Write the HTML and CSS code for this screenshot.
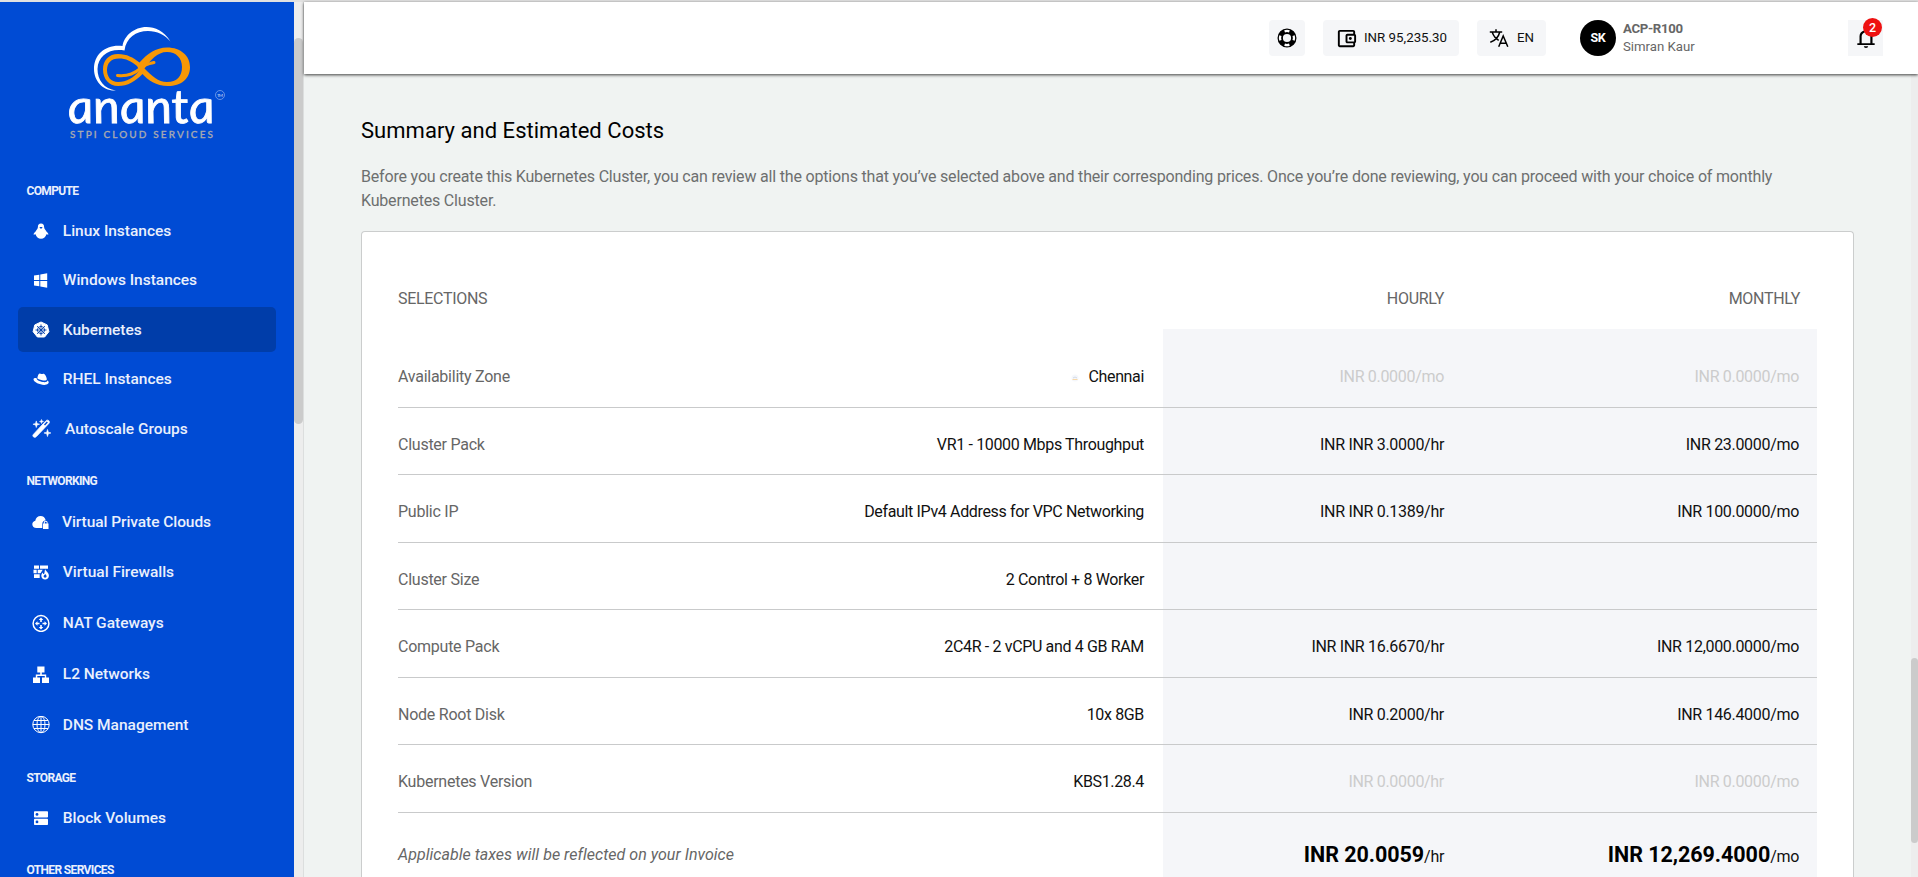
FILE: index.html
```html
<!DOCTYPE html>
<html lang="en">
<head>
<meta charset="utf-8">
<title>Kubernetes Cluster</title>
<link rel="stylesheet" href="styles.css">
</head>
<body>
<div class="app">
  <aside class="sidebar">
    <nav class="menu">
      <svg class="logo" width="294" height="178" viewBox="0 2 294 178">
        <path fill="#fff" d="M170.500 41.500C164 31 155 27 146.500 27C134 27 124 36 122.500 46C106 44 94 54 94 69C94 81 103 91.500 116 90.500C104 89 97.500 80 97.500 69C98 56 109 48 124.500 50.500C126 38 136 31 148 31C157 31 165 35 170.500 41.500Z"/>
        <path fill="#f79806" fill-rule="evenodd" d="M139.500 62.500C147 54 156 47.500 167 47.500C181 47.500 190 56 190 67C190 79 181 86 168 86C156 86 148 80 142.500 74C135 81.500 128 86 118 86C109 86 103 79 103 69.500C103 60 109 54 118 54C127 54 133 57.500 139.500 62.500ZM144.500 68.500C151 60 157 52 167 52C176 52 182 58 182 67C182 76 177 82 167 82C158 82 152 76 144.500 68.500ZM137 66C131 61 126 58.500 119 58.500C111 58.500 107 63 107 70C107 77 111 82 118 82C127 82 133 78 139.500 70.500Z"/>
        <path fill="none" stroke="#f79806" stroke-width="3" stroke-linecap="round" d="M117.500 75.500C129 76.500 135 73 141 68S148 64.500 154 62.500"/>
        <text class="logo-name" transform="translate(69.500 123) skewX(8)" textLength="147" lengthAdjust="spacingAndGlyphs">ananta</text>
        <circle cx="220" cy="95" r="4.500" fill="none" stroke="#8fb0ec" stroke-width=".7"/>
        <text class="logo-tm" x="217" y="97" textLength="6">TM</text>
        <text class="logo-sub" x="70" y="138.200" textLength="143">STPI CLOUD SERVICES</text>
      </svg>
      <h2 class="group">COMPUTE</h2>
      <ul class="items">
        <li class="item"><svg class="ico" viewBox="0 0 18 18"><path d="M9 1.500C6.800 1.500 5.900 3 5.900 5c0 1.600-1.400 2.900-2.300 4.400C2.500 10.500 1.300 11.800 1.500 12.300c.3.500 1.600.1 2.100-.1.500 2.600 2.700 4.500 5.400 4.500s4.900-1.900 5.400-4.500c.5.200 1.800.6 2.100.1.200-.5-1-1.800-2.100-2.900C13.500 7.900 12.100 6.600 12.100 5c0-2-.9-3.500-3.100-3.500z"/><path class="cut" d="M7.500 5h3L9.800 6.500H8.200z"/></svg>Linux Instances</li>
        <li class="item"><svg class="ico" viewBox="0 0 18 18"><path d="M2 4.500 7.300 3.700V8.900H2zM8.300 3.500 15.200 2.300V8.900H8.300zM2 9.900H7.300V15.200L2 14.400zM8.300 9.900H15.200V16.700L8.300 15.400z"/></svg>Windows Instances</li>
        <li class="item active"><svg class="ico" viewBox="0 0 18 18"><path d="M9 1l6.200 2.900 1.700 6.800L12.600 16H5.400L1.100 10.700l1.700-6.800z" stroke="#fff" stroke-linejoin="round"/><g class="cutline"><circle cx="9" cy="9" r="3.600"/><path d="M9 3.500v11M3.500 9h11M5.100 5.100l7.800 7.800M12.900 5.100 5.100 12.900"/></g></svg>Kubernetes</li>
        <li class="item"><svg class="ico" viewBox="0 0 18 18"><path d="M5.300 8.200C5.800 5.800 6.400 3.600 7.600 3.500c.8 0 1.200.6 2.100.5.800-.1 1.200-.5 2.100-.2 1.500.5 2.600 2.800 3 5.100.2 1.500-1.700 1.800-3.700 1.500-2.500-.3-5-1.200-5.800-2.200z"/><path d="M4.600 8.100C2.900 8 1.300 8.300 1.500 9.600c.4 2.700 6.100 5.300 10.700 5.300 3.300 0 5.400-1.500 4.100-3.600-.3-.5-.7-.7-1-.8.300 1.500-2.100 1.900-4.600 1.500-3.500-.5-6.300-2-6.100-3.900z"/></svg>RHEL Instances</li>
        <li class="item wide"><svg class="ico big" viewBox="0 0 20 20"><path d="M1.500 16.200 14.800 1.800c.8-.8 2.200-.8 2.900 0 .8.800.8 2 0 2.900L4.400 18.600c-.9.900-2.200.8-2.900.1s-.8-1.700 0-2.500z" stroke="#fff" stroke-width=".9"/><path class="cut" d="m12.600 5.900 3-3.200 1.100 1.100-3 3.100z"/><path d="M4.500 2 5.300 4.700 8 5.500l-2.700.8L4.500 9l-.8-2.700L1 5.500l2.700-.8zM16.300 11l.9 2.900 2.800.8-2.800.9-.9 2.900-.8-2.900-2.900-.9 2.900-.8zM10 .5l.5 1.600 1.600.5-1.600.5-.5 1.600-.5-1.600-1.600-.5 1.600-.5z" stroke="#fff" stroke-width=".6"/></svg>Autoscale Groups</li>
      </ul>
      <h2 class="group">NETWORKING</h2>
      <ul class="items loose">
        <li class="item near"><svg class="ico" viewBox="0 0 18 18"><path d="M4.500 15C2 15 .3 13.500.3 11.300.3 9.300 1.700 8 3.300 7.700 3.700 5 5.900 3 8.600 3c2.500 0 4.500 1.500 5.100 4.200-2.200.3-3.400 1.800-3.400 3.700V15z"/><path d="M11 10.500h.8V9.800c0-1.200.8-2 1.900-2s1.900.8 1.900 2v.7h.9V16H11zm1.800 0h1.900V9.800c0-1.300-1.900-1.300-1.900 0z" fill-rule="evenodd"/></svg>Virtual Private Clouds</li>
        <li class="item"><svg class="ico" viewBox="0 0 18 18"><path d="M2 2.500h5v3.200H2zM8 2.500h8v3.200H8zM1.500 6.700h3.200v3.500H1.500zM5.700 6.700h5L8.500 10.200H5.700zM2 11.200h5.700v3.900H2z"/><path d="M13.200 6.200c.4 1.700 3.700 3.300 3.700 6.500 0 2.200-1.700 3.700-3.800 3.700s-3.800-1.500-3.800-3.700c0-1.500.9-2.700 1.600-3.300 0 1 .4 1.500 1.100 1.600.9-1.400.4-3.100 1.200-4.800z"/><path class="cut" d="M13.100 11c.7.800 1.500 1.400 1.500 2.300 0 .8-.7 1.400-1.500 1.400s-1.500-.6-1.500-1.400c0-.9 1-1.300 1.500-2.300z"/></svg>Virtual Firewalls</li>
        <li class="item"><svg class="ico" viewBox="0 0 18 18"><circle class="line" cx="9" cy="9.500" r="7.900"/><path d="M9 3.500 11.300 6H9.800v2H8.200V6H6.700zM9 15.500 6.700 13h1.500v-2h1.600v2h1.500zM3 9.500l2.500-2.300v1.500h2v1.600h-2v1.500zM15 9.500l-2.500 2.300v-1.500h-2V8.700h2V7.200z"/></svg>NAT Gateways</li>
        <li class="item"><svg class="ico" viewBox="0 0 18 18"><path d="M5.300 1.500h7.200v6h-2.700v2h4.400v3H17V18H10v-5.500h2.800v-1.600H5.300v1.600H8V18H1v-5.500h2.800v-3h4.400v-2H5.300z"/></svg>L2 Networks</li>
        <li class="item"><svg class="ico" viewBox="0 0 18 18"><g class="line thin"><circle cx="9" cy="8.500" r="8.200"/><ellipse cx="9" cy="8.500" rx="4" ry="8.200"/><path d="M9 .3v16.400M.8 8.500h16.400M2 4.500h14M2 12.500h14"/></g></svg>DNS Management</li>
      </ul>
      <h2 class="group">STORAGE</h2>
      <ul class="items">
        <li class="item"><svg class="ico" viewBox="0 0 18 18"><rect x="2" y="2.300" width="14" height="6.200" rx=".8"/><rect x="2" y="9.800" width="14" height="6.200" rx=".8"/><circle class="cut" cx="5" cy="5.400" r="1.400"/><circle class="cut" cx="5" cy="12.900" r="1.400"/></svg>Block Volumes</li>
      </ul>
      <h2 class="group last">OTHER SERVICES</h2>
    </nav>
    <div class="side-scroll"><div class="side-thumb"></div></div>
  </aside>

  <div class="page">
    <header class="topbar">
      <button class="chip help"><svg width="20" height="20" viewBox="0 0 20 20" fill="none"><circle cx="10" cy="10" r="6.800" stroke="#000" stroke-width="5.400"/><g stroke="#fff" stroke-width="2.300"><path d="M7.600 3.400A7 7 0 0 1 12.400 3.400M16.600 7.600a7 7 0 0 1 0 4.800M12.400 16.600a7 7 0 0 1-4.800 0M3.400 12.400a7 7 0 0 1 0-4.800"/></g></svg></button>
      <button class="chip wallet"><svg width="23" height="23" viewBox="0 0 24 24"><path d="M21 7.280V5c0-1.100-.9-2-2-2H5c-1.110 0-2 .9-2 2v14c0 1.100.89 2 2 2h14c1.100 0 2-.9 2-2v-2.280A2 2 0 0 0 22 15V9a2 2 0 0 0-1-1.720zM20 9v6h-7V9h7zM5 19V5h14v2h-6c-1.100 0-2 .9-2 2v6c0 1.100.9 2 2 2h6v2H5z"/><circle cx="16" cy="12" r="1.500"/></svg>INR 95,235.30</button>
      <button class="chip lang"><svg width="20" height="20" viewBox="0 0 20 20" fill="none" stroke="#000" stroke-width="1.500"><path d="M.8 4h12.400M7 1.300V4M3.200 4.200C4.800 8.500 7 10.800 9.700 12.300M10.700 4.200C9.500 9 6 12.500 1.300 14.300M9.700 18.700 14.200 8l4.600 10.700M11.400 15.200h5.800"/></svg>EN</button>
      <div class="user">
        <div class="avatar">SK</div>
        <div class="who"><strong>ACP-R100</strong><span>Simran Kaur</span></div>
      </div>
      <div class="bell"><svg width="26" height="24" viewBox="0 0 24 24" preserveAspectRatio="none"><path fill-rule="evenodd" d="M4 19v-1.700h2v-7c0-2.800 1.700-5.100 4.500-5.800V3.500a1.500 1.500 0 0 1 3 0v1C16.300 5.200 18 7.500 18 10.300v7h2V19zM8 17.300h8v-7a4 4 0 0 0-8 0zM10 20.200h4a2 1.800 0 0 1-4 0z"/></svg><span class="badge">2</span></div>
    </header>

    <div class="body">
      <main class="content">
        <h1>Summary and Estimated Costs</h1>
        <p class="intro">Before you create this Kubernetes Cluster, you can review all the options that you’ve selected above and their corresponding prices. Once you’re done reviewing, you can proceed with your choice of monthly<br>Kubernetes Cluster.</p>
        <section class="card">
          <div class="row head"><span>SELECTIONS</span><span></span><span class="hr">HOURLY</span><span class="mo">MONTHLY</span></div>
          <div class="row first"><span class="label">Availability Zone</span><span class="value"><svg class="flag" width="8" height="8" viewBox="0 0 8 8"><circle cx="4" cy="4" r="3.500" fill="#f5f7fb"/><path d="M1.500 5.500h5" stroke="#f8d9a8"/><path d="M2 4l2-1 2 1" stroke="#c3cddd" stroke-width=".7" fill="none"/></svg>Chennai</span><span class="hr muted">INR 0.0000/mo</span><span class="mo muted">INR 0.0000/mo</span></div>
          <div class="row"><span class="label">Cluster Pack</span><span class="value">VR1 - 10000 Mbps Throughput</span><span class="hr">INR INR 3.0000/hr</span><span class="mo">INR 23.0000/mo</span></div>
          <div class="row"><span class="label">Public IP</span><span class="value">Default IPv4 Address for VPC Networking</span><span class="hr">INR INR 0.1389/hr</span><span class="mo">INR 100.0000/mo</span></div>
          <div class="row"><span class="label">Cluster Size</span><span class="value">2 Control + 8 Worker</span><span class="hr"></span><span class="mo"></span></div>
          <div class="row"><span class="label">Compute Pack</span><span class="value">2C4R - 2 vCPU and 4 GB RAM</span><span class="hr">INR INR 16.6670/hr</span><span class="mo">INR 12,000.0000/mo</span></div>
          <div class="row"><span class="label">Node Root Disk</span><span class="value">10x 8GB</span><span class="hr">INR 0.2000/hr</span><span class="mo">INR 146.4000/mo</span></div>
          <div class="row"><span class="label">Kubernetes Version</span><span class="value">KBS1.28.4</span><span class="hr muted">INR 0.0000/hr</span><span class="mo muted">INR 0.0000/mo</span></div>
          <div class="row total"><span class="note">Applicable taxes will be reflected on your Invoice</span><span class="hr"><b>INR 20.0059</b>/hr</span><span class="mo"><b>INR 12,269.4000</b>/mo</span></div>
        </section>
      </main>
      <div class="page-scroll"><div class="page-thumb"></div></div>
    </div>
  </div>
</div>
</body>
</html>
```
FILE: styles.css
```css
* { box-sizing: border-box; }
body { margin: 0; height: 877px; overflow: hidden; font-family: Roboto, "Liberation Sans", sans-serif; font-size: 16px; color: #111; background: #f0f3f2; }
h1, h2, p, ul { margin: 0; padding: 0; }
button { border: 0; padding: 0; font: inherit; color: inherit; }

.app { display: flex; height: 877px; border-top: 2px solid #e1e1e1; }

/* Sidebar */
.sidebar { display: flex; width: 304px; flex: none; overflow: hidden; border-right: 1px solid #dcdede; }
.menu { width: 294px; flex: none; overflow: hidden; background: #004bd4; color: #eaf0fc; }
.logo { display: block; margin-bottom: -19.500px; }
.logo-name { font: italic 400 47px Lato, sans-serif; fill: #fff; stroke: #fff; stroke-width: .8px; }
.logo-tm { font: 4.500px Lato, sans-serif; fill: #cfdcf6; }
.logo-sub { font: 500 10px Lato, sans-serif; fill: #a7a9b0; stroke: #a7a9b0; stroke-width: .3px; }
.group { margin: 20px 0 8px 26.500px; font-size: 12px; line-height: 20px; font-weight: 700; letter-spacing: -.65px; }
.group.last { line-height: 18px; margin-top: 20.500px; margin-bottom: 0; }
.items { list-style: none; display: flex; flex-direction: column; gap: 4.400px; }
.items.loose { gap: 5.900px; }
.item { display: flex; align-items: center; gap: 12.800px; height: 45px; margin: 0 18px; padding-left: 14px; border-radius: 5px; font-size: 15.500px; font-weight: 500; letter-spacing: -.02px; white-space: nowrap; }
.item.wide { gap: 14px; }
.item.near { gap: 12px; letter-spacing: -.07px; }
.item.active { background: #003da9; }
.ico { width: 18px; height: 18px; fill: #fff; flex: none; }
.ico.big { width: 19px; height: 19px; }
.cut { fill: #004bd4; }
.cutline { fill: none; stroke: #003da9; stroke-width: .9px; }
.line { fill: none; stroke: #fff; stroke-width: 1.500px; }
.line.thin { stroke-width: 1px; }
.side-scroll { width: 9px; padding-top: 36px; background: #ededed; }
.side-thumb { height: 386px; border-radius: 5px; background: #cbcbcb; }

/* Top bar */
.page { flex: 1; min-width: 0; display: flex; flex-direction: column; }
.topbar { position: relative; z-index: 1; flex: none; display: flex; align-items: center; height: 72px; padding: 0 35px 0 965px; background: #fff; box-shadow: 0 1px 3px rgba(0,0,0,.75); }
.chip { display: flex; align-items: center; height: 36px; border-radius: 4px; background: #f5f6f8; font-size: 13.300px; line-height: 16px; white-space: nowrap; }
.chip svg { flex: none; }
.help { width: 36px; justify-content: center; }
.wallet { width: 136px; margin-left: 18px; padding-left: 12px; gap: 6px; }
.lang { width: 69px; margin-left: 18px; padding-left: 12px; gap: 8px; }
.user { display: flex; gap: 7px; margin-left: 34px; }
.avatar { width: 36px; height: 36px; border-radius: 50%; background: #000; color: #fff; font-size: 12.500px; font-weight: 700; line-height: 36px; text-align: center; letter-spacing: -.2px; }
.who { display: flex; flex-direction: column; font-size: 13.200px; line-height: 18px; color: #666; }
.who strong { letter-spacing: -.3px; }
.bell { position: relative; display: flex; align-items: center; justify-content: center; width: 35px; height: 36px; margin-left: auto; background: #f5f6f8; }
.badge { position: absolute; left: 15px; top: -2px; width: 19px; height: 19px; border-radius: 50%; background: #ee1111; color: #fff; font-size: 12.500px; font-weight: 500; line-height: 19px; text-align: center; }

/* Cost summary */
.body { flex: 1; min-height: 0; display: flex; }
.content { flex: 1; min-width: 0; display: flex; flex-direction: column; padding: 42px 57px 0 57px; }
h1 { font-size: 22px; line-height: 30px; font-weight: 400; letter-spacing: .03px; color: #000; }
.intro { margin-top: 19px; line-height: 24px; color: #6d6f6f; letter-spacing: -.18px; white-space: nowrap; }
.card { flex: 1; min-height: 0; overflow: hidden; margin-top: 18px; padding: 44px 36px 0; border: 1px solid #cbcdcd; border-bottom: 0; border-radius: 4px 4px 0 0; background: #fff; }
.row { display: grid; grid-template-columns: 365px 400px 299px 1fr; height: 67.500px; line-height: 59px; border-bottom: 1px solid #c9cacb; letter-spacing: -.31px; white-space: nowrap; }
.row span { padding-top: 7px; }
.head { height: 53px; border: 0; line-height: 45px; color: #666; }
.row.head span { padding-top: 0; }
.first { height: 78.500px; line-height: 58px; }
.row.first span { padding-top: 19px; }
.label, .note { color: #666; }
.label { letter-spacing: -.25px; }
.value { padding-right: 19px; text-align: right; letter-spacing: -.35px; }
.flag { margin-right: 9px; }
.hr, .mo { text-align: right; background: #f5f6f9; padding-right: 18px; }
.head .hr, .head .mo { background: none; }
.head .mo { padding-right: 17px; }
.muted { color: #ccc; }
.total { grid-template-columns: 765px 299px 1fr; height: 65px; line-height: 56px; border: 0; }
.row.total span { padding-top: 14px; }
.note { font-style: italic; letter-spacing: .03px; }
.total b { font-size: 21.500px; letter-spacing: -.05px; color: #000; }
.page-scroll { width: 7px; padding-top: 584px; background: #ededed; }
.page-thumb { height: 185px; border-radius: 4px; background: #cbcbcb; }
```
